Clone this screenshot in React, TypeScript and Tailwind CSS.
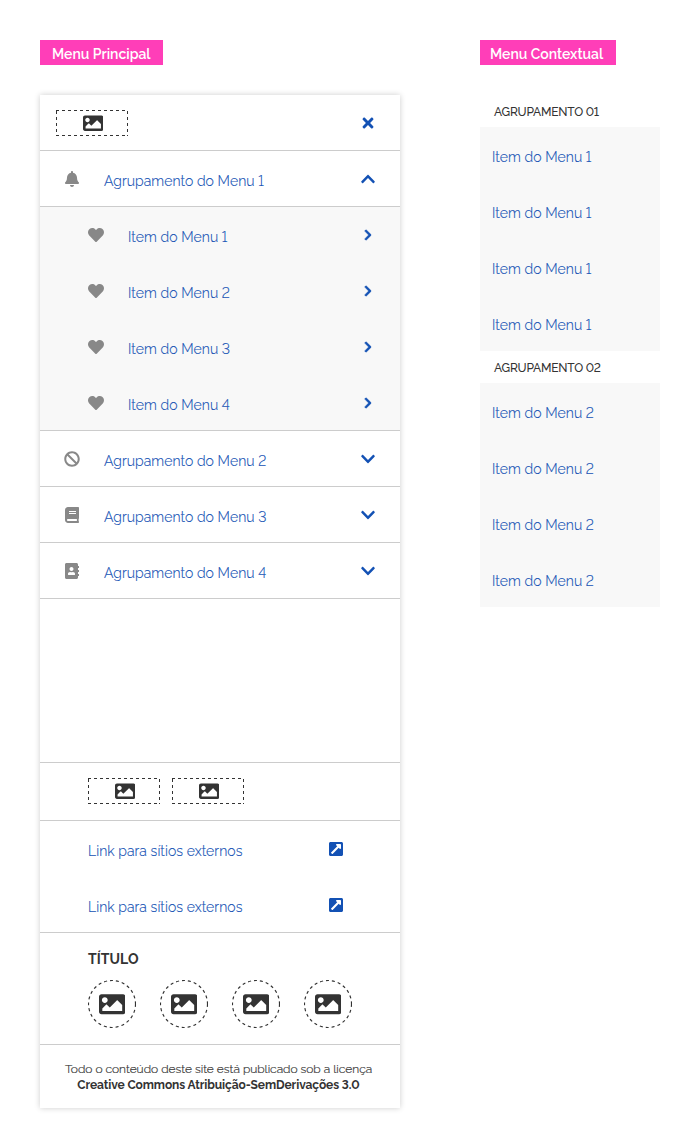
import type { ReactNode } from 'react';
import {
  FaAddressBook,
  FaBan,
  FaBell,
  FaBook,
  FaChevronDown,
  FaChevronRight,
  FaChevronUp,
  FaExternalLinkSquareAlt,
  FaHeart,
  FaImage,
  FaTimes,
} from 'react-icons/fa';

function Tag({ children, className }: { children: ReactNode; className: string }) {
  return (
    <div className={`flex h-[25px] items-center bg-[#ff3eb8] pt-[3px] text-[14px] font-semibold whitespace-nowrap text-white ${className}`}>
      {children}
    </div>
  );
}

function LogoBox() {
  return (
    <div className="flex h-[26px] w-[72px] items-center justify-center">
      <svg className="absolute h-[26px] w-[72px]" viewBox="0 0 72 26" fill="none" stroke="#333333">
        <path d="M0 .5H72M0 25.5H72" strokeDasharray="3 3" />
        <path d="M.5 0V26M71.5 0V26" strokeDasharray="3 3" strokeDashoffset="-1" />
      </svg>
      <FaImage className="relative top-[0.5px] left-px size-[20.5px] text-[#333333]" />
    </div>
  );
}

function RoundLogo() {
  return (
    <div className="flex size-12 items-center justify-center">
      <svg className="absolute size-12" viewBox="0 0 48 48" fill="none">
        <circle cx="24" cy="24" r="23.5" stroke="#333333" strokeWidth="1.15" strokeDasharray="3 3" />
      </svg>
      <FaImage className="size-[26.5px] text-[#333333]" />
    </div>
  );
}

function Label({ children }: { children: ReactNode }) {
  return (
    <span className="flex-1 pt-1 text-[14px] font-light tracking-[0.07px] [-webkit-text-stroke:0.15px_#1351b4]">
      {children}
    </span>
  );
}

function Group({ icon, label, open }: { icon: ReactNode; label: string; open?: boolean }) {
  return (
    <div className="flex h-14 items-center border-b border-[#cccccc] pr-6 pl-6">
      <span className="mt-px mr-6 flex w-4 justify-center text-[#888888]">{icon}</span>
      <Label>{label}</Label>
      <span className="mt-px">{open ? <FaChevronUp /> : <FaChevronDown />}</span>
    </div>
  );
}

function SubItem({ label }: { label: string }) {
  return (
    <div className="flex h-14 items-center pr-[26px] pl-12">
      <FaHeart className="mr-6 text-[#888888]" />
      <Label>{label}</Label>
      <FaChevronRight className="size-[12px] stroke-[#1351b4] [stroke-width:28]" />
    </div>
  );
}

function ExternalLink() {
  return (
    <div className="flex h-14 items-center pr-14 pl-12">
      <Label>Link para sítios externos</Label>
      <FaExternalLinkSquareAlt />
    </div>
  );
}

function ContextGroup({ title, label }: { title: string; label: string }) {
  return (
    <section>
      <h2 className="flex h-8 items-center pt-px pl-[14px] text-[12px] font-medium tracking-[-0.22px] text-[#333333]">{title}</h2>
      <div className="bg-[#f8f8f8]">
        {[0, 1, 2, 3].map((i) => (
          <div key={i} className="flex h-14 items-center pl-3">
            <Label>{label}</Label>
          </div>
        ))}
      </div>
    </section>
  );
}

export default function App() {
  return (
    <div className="flex h-[1148px] items-start bg-white pt-10 pl-10 font-[Raleway,Lato,sans-serif] text-[16px] leading-5 text-[#1351b4] lining-nums">
      <div className="w-[360px]">
        <Tag className="w-[123px] pl-3">Menu Principal</Tag>
        <nav className="mt-[30px] flex h-[1013px] flex-col bg-white shadow-[0_0_6px_rgba(0,0,0,0.2)]">
          <header className="flex h-14 items-center justify-between border-b border-[#cccccc] pr-6 pl-4">
            <LogoBox />
            <FaTimes />
          </header>
          <Group icon={<FaBell />} label="Agrupamento do Menu 1" open />
          <div className="h-56 border-b border-[#cccccc] bg-[#f8f8f8]">
            <SubItem label="Item do Menu 1" />
            <SubItem label="Item do Menu 2" />
            <SubItem label="Item do Menu 3" />
            <SubItem label="Item do Menu 4" />
          </div>
          <Group icon={<FaBan />} label="Agrupamento do Menu 2" />
          <Group icon={<FaBook />} label="Agrupamento do Menu 3" />
          <Group icon={<FaAddressBook />} label="Agrupamento do Menu 4" />
          <div className="flex-1" />
          <div className="flex h-[59px] items-start gap-3 border-y border-[#cccccc] pt-[15px] pl-12">
            <LogoBox />
            <LogoBox />
          </div>
          <div className="h-28 border-b border-[#cccccc]">
            <ExternalLink />
            <ExternalLink />
          </div>
          <div className="h-28 border-b border-[#cccccc] pt-4 pl-12 text-[#333333]">
            <h2 className="text-[14px] leading-5 font-bold tracking-[0.05px]">TÍTULO</h2>
            <div className="mt-[11px] flex gap-6">
              <RoundLogo />
              <RoundLogo />
              <RoundLogo />
              <RoundLogo />
            </div>
          </div>
          <footer className="h-[63px] pt-4 pr-[3px] text-center text-[12px] leading-4 whitespace-nowrap text-[#333333]">
            <p className="font-light tracking-[-0.02px] [-webkit-text-stroke:0.2px_#333333]">
              Todo o conteúdo deste site está publicado sob a licença
            </p>
            <p className="font-bold tracking-[-0.09px]">Creative Commons Atribuição-SemDerivações 3.0</p>
          </footer>
        </nav>
      </div>
      <aside className="ml-20 w-[180px]">
        <Tag className="w-[136px] pl-[10px]">Menu Contextual</Tag>
        <div className="mt-[30px]">
          <ContextGroup title="AGRUPAMENTO 01" label="Item do Menu 1" />
          <ContextGroup title="AGRUPAMENTO 02" label="Item do Menu 2" />
        </div>
      </aside>
    </div>
  );
}
